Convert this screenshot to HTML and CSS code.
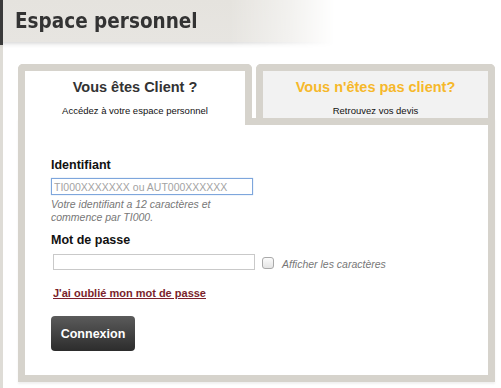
FILE: index.html
```html
<!DOCTYPE html>
<html lang="fr">
<head>
<meta charset="utf-8">
<title>Espace personnel</title>
<link rel="stylesheet" href="styles.css">
</head>
<body>
<div class="page">
  <div class="header">
    <h1 class="title">Espace personnel</h1>
  </div>
  <div class="frame">
    <div class="tabs">
      <div class="tab tab-active">
        <div class="tab-title">Vous êtes Client ?</div>
        <div class="tab-sub">Accédez à votre espace personnel</div>
      </div>
      <div class="tab tab-other">
        <div class="tab-title tab-title-orange">Vous n'êtes pas client?</div>
        <div class="tab-sub">Retrouvez vos devis</div>
      </div>
    </div>
    <div class="panel">
      <div class="label">Identifiant</div>
      <input class="field field-focus" type="text" placeholder="TI000XXXXXXX ou AUT000XXXXXX">
      <div class="help">Votre identifiant a 12 caractères et commence par TI000.</div>
      <div class="label label-pass">Mot de passe</div>
      <div class="pass-row">
        <input class="field field-pass" type="password">
        <input class="check" type="checkbox">
        <span class="check-label">Afficher les caractères</span>
      </div>
      <a class="forgot" href="#">J'ai oublié mon mot de passe</a>
      <button class="btn" type="button">Connexion</button>
    </div>
  </div>
</div>
</body>
</html>
```
FILE: styles.css
```css
html, body {
  margin: 0;
  padding: 0;
  background: #fff;
}
body {
  font-family: "Liberation Sans", Arial, sans-serif;
  color: #222;
}
.page {
  border-left: 3px solid #dedcd6;
  min-height: 388px;
  box-sizing: border-box;
}
.header {
  margin-left: -3px;
  height: 48px;
  padding-left: 15px;
  width: 320px;
  box-sizing: content-box;
  background:
    linear-gradient(to right, #3a3a3a 0 3px, transparent 3px) 0 0 / 100% 45px no-repeat,
    linear-gradient(to bottom, #e5e3de 0, #e7e5e1 42px, rgba(0,0,0,0.13) 42px, rgba(0,0,0,0.04) 45px, rgba(0,0,0,0) 48px);
  -webkit-mask-image: linear-gradient(to right, #000 0, #000 230px, rgba(0,0,0,0.5) 290px, transparent 335px);
  mask-image: linear-gradient(to right, #000 0, #000 230px, rgba(0,0,0,0.5) 290px, transparent 335px);
}
.title {
  margin: 0;
  font-family: "DejaVu Sans Condensed", "DejaVu Sans", sans-serif;
  font-weight: bold;
  font-size: 20.5px;
  line-height: 42px;
  color: #333;
}
.frame {
  margin: 16px 0 0 15px;
  width: 477px;
}
.tabs {
  display: flex;
  align-items: flex-start;
  gap: 4px;
}
.tab {
  box-sizing: border-box;
  border: 7px solid #d6d3cc;
  border-bottom: none;
  border-radius: 5px 5px 0 0;
  text-align: center;
  padding-top: 7px;
}
.tab-active {
  width: 234px;
  height: 61px;
  background: #fff;
  margin-bottom: -7px;
  position: relative;
  z-index: 1;
}
.tab-other {
  width: 239px;
  height: 54px;
  background: #f2f2f2;
}
.tab-title {
  font-weight: bold;
  font-size: 14.5px;
  line-height: 18px;
  color: #333;
}
.tab-title-orange {
  color: #f6b82a;
}
.tab-sub {
  margin-top: 9px;
  font-size: 9.5px;
  line-height: 12px;
  color: #111;
}
.panel {
  box-sizing: border-box;
  border: 7px solid #d6d3cc;
  height: 264px;
  background: #fff;
  padding: 33px 0 0 26px;
  box-shadow: 0 2px 2px rgba(0,0,0,0.06);
}
.label {
  font-weight: bold;
  font-size: 12.5px;
  line-height: 14px;
  color: #111;
}
.field {
  display: block;
  box-sizing: border-box;
  margin: 6px 0 0 0;
  width: 202px;
  height: 17px;
  padding: 0 2px;
  border: 1px solid #c9c9c9;
  font-family: "Liberation Sans", Arial, sans-serif;
  font-size: 10.5px;
  background: #fff;
  outline: none;
}
.field-focus {
  border-color: #7ea6dc;
  box-shadow: 0 0 1px #9fc0ea;
}
.field-focus::placeholder {
  color: #a3a3a3;
}
.help {
  margin-top: 3px;
  width: 202px;
  font-style: italic;
  font-size: 10.5px;
  line-height: 13px;
  color: #777;
}
.label-pass {
  margin-top: 9px;
}
.pass-row {
  display: flex;
  align-items: center;
  margin-top: 7px;
  margin-left: 2px;
}
.field-pass {
  margin: 0;
  height: 16px;
}
.check {
  appearance: none;
  -webkit-appearance: none;
  box-sizing: border-box;
  width: 12px;
  height: 12px;
  margin: 2px 0 0 7px;
  border: 1px solid #a9a9a9;
  border-radius: 3px;
  background: linear-gradient(#fbfbfb, #e4e4e4);
}
.check-label {
  margin: 4px 0 0 8px;
  font-style: italic;
  font-size: 10.5px;
  color: #777;
}
.forgot {
  display: inline-block;
  margin: 17px 0 0 2px;
  font-weight: bold;
  font-size: 11px;
  line-height: 13px;
  color: #7b1f2c;
  text-decoration: underline;
}
.btn {
  display: block;
  margin-top: 15px;
  width: 84px;
  height: 35px;
  border: none;
  border-radius: 4px;
  background: linear-gradient(#5b5b5b, #2c2c2c);
  color: #fff;
  font-family: "Liberation Sans", Arial, sans-serif;
  font-weight: bold;
  font-size: 12.5px;
  padding: 0;
}
```
